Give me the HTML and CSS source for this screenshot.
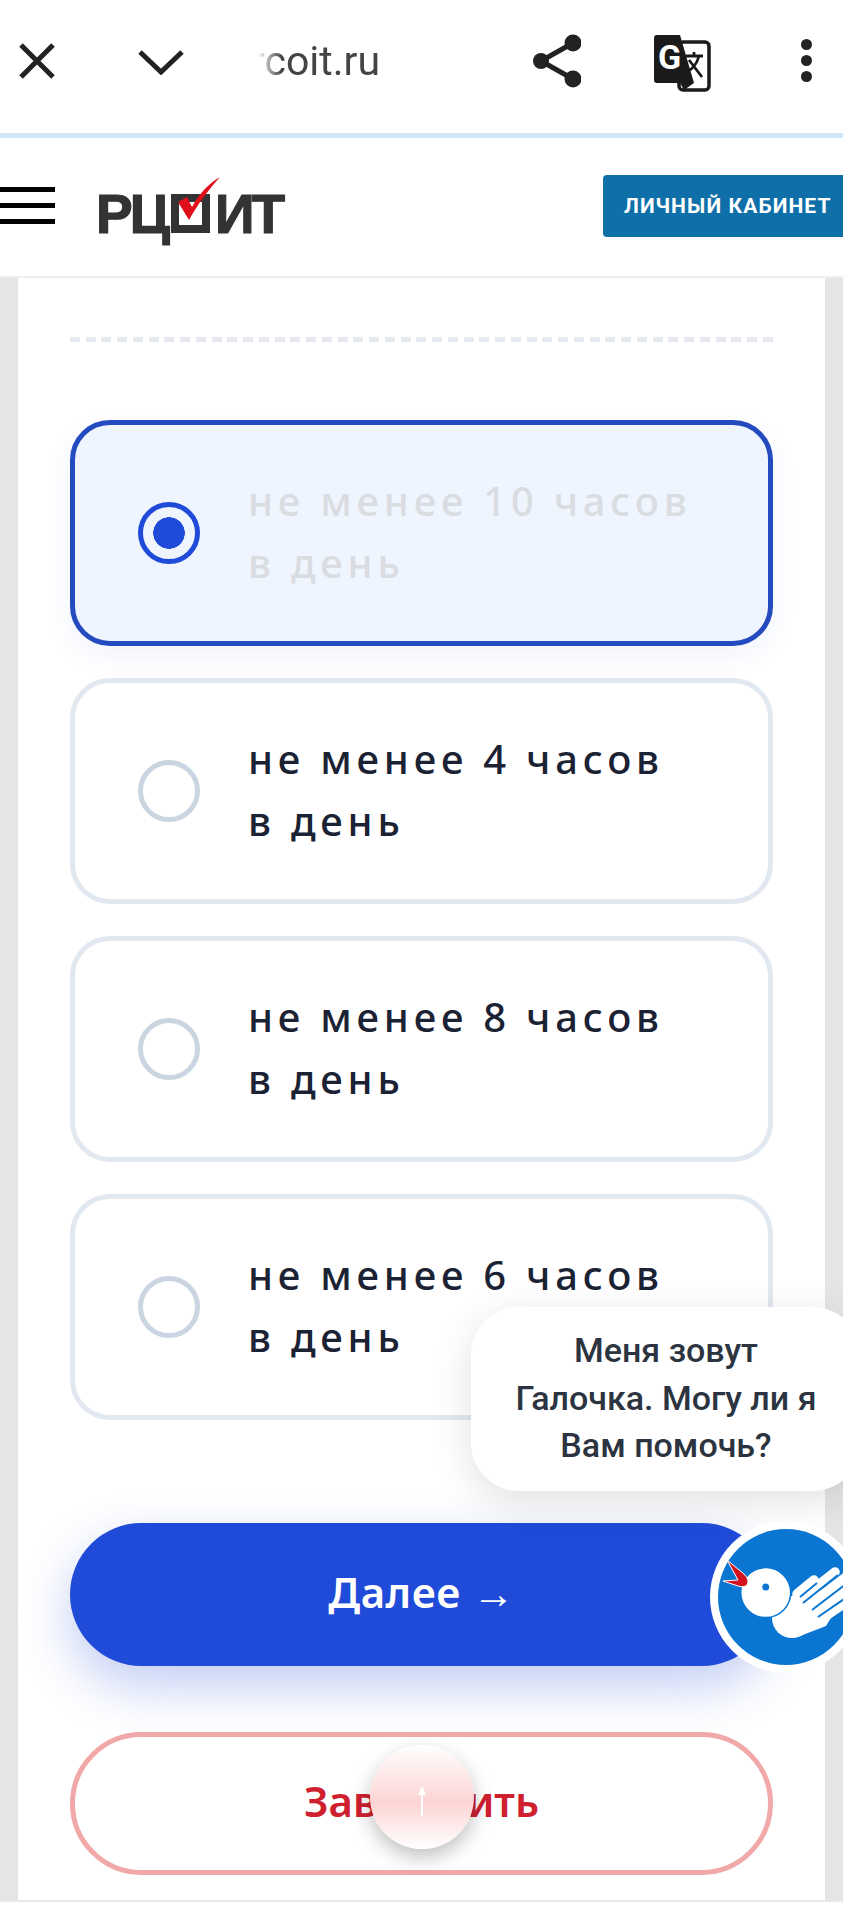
FILE: index.html
```html
<!DOCTYPE html>
<html lang="ru">
<head>
<meta charset="utf-8">
<title>РЦОИТ</title>
<link rel="stylesheet" href="styles.css">
</head>
<body>
<div class="toolbar">
  <div class="tb-left">
    <svg class="ic-x" width="36" height="36" viewBox="0 0 36 36"><path d="M2 2L34 34M34 2L2 34" stroke="#222" stroke-width="5" fill="none"/></svg>
    <svg class="ic-chev" width="46" height="26" viewBox="0 0 46 26"><path d="M2 3L23 23L44 3" stroke="#222" stroke-width="5" fill="none"/></svg>
    <div class="url"><span>rcoit.ru</span></div>
  </div>
  <div class="tb-right">
    <svg class="ic-share" width="48" height="54" viewBox="0 0 48 54"><path d="M40 9L8 27L40 45" stroke="#222" stroke-width="5" fill="none"/><circle cx="40" cy="9" r="8.5" fill="#222"/><circle cx="8" cy="27" r="8" fill="#222"/><circle cx="40" cy="45" r="8.5" fill="#222"/></svg>
    <svg class="ic-tr" width="58" height="58" viewBox="0 0 58 58"><rect x="26" y="8" width="30" height="48" rx="4" fill="#fff" stroke="#1a1a1a" stroke-width="3.5"/><path d="M4 1H27L41 49H4Q1 49 1 46V4Q1 1 4 1Z" fill="#1a1a1a"/><path d="M27 49L41 49L31 56Z" fill="#1a1a1a"/><text class="tr-g" x="5" y="35">G</text><path d="M33 22H50M41 18V22M46 22Q43 33 34 38M36 26L49 43" stroke="#1a1a1a" stroke-width="2.8" fill="none"/></svg>
    <div class="dots"><i></i><i></i><i></i></div>
  </div>
</div>
<div class="progress"></div>
<header class="site-head">
  <div class="burger"><i></i><i></i><i></i></div>
  <div class="logo">
    <span class="logo-t">РЦ</span><span class="logo-box"></span><span class="logo-t">ИТ</span>
    <svg class="logo-check" width="46" height="46" viewBox="0 0 46 46"><path d="M1 26L10 21L15 31C22 18 31 8 43 1C32 13 21 28 12 44Z" fill="#e0101a"/></svg>
  </div>
  <a class="cabinet">Личный кабинет</a>
</header>
<main class="page">
  <section class="card">
    <div class="dash"></div>
    <div class="options">
      <div class="opt opt-on"><span class="radio radio-on"></span><p class="opt-text">не менее 10 часов<br>в день</p></div>
      <div class="opt"><span class="radio"></span><p class="opt-text">не менее 4 часов<br>в день</p></div>
      <div class="opt"><span class="radio"></span><p class="opt-text">не менее 8 часов<br>в день</p></div>
      <div class="opt"><span class="radio"></span><p class="opt-text">не менее 6 часов<br>в день</p></div>
    </div>
    <div class="actions">
      <button class="btn btn-next"><span class="btn-label">Далее →</span></button>
      <button class="btn btn-end"><span class="btn-label">Завершить</span></button>
    </div>
  </section>
</main>
<div class="foot"></div>

<div class="tip">Меня зовут<br>Галочка. Могу ли я<br>Вам помочь?</div>
<svg class="bird" width="160" height="160" viewBox="706 1517 160 160">
  <defs><clipPath id="bc"><circle cx="786" cy="1597" r="68"/></clipPath></defs>
  <circle cx="786" cy="1597" r="76" fill="#fff"/>
  <circle cx="786" cy="1597" r="68" fill="#0a76d2"/>
  <g clip-path="url(#bc)">
    <circle cx="792" cy="1618" r="20" fill="#fff"/>
    <path d="M782 1603L800 1590L848 1590L826 1626L800 1636Z" fill="#fff"/>
    <path d="M797 1594L814 1580M802 1598L835 1572M808 1606L855 1570M814 1613L855 1582M820 1620L855 1596" stroke="#fff" stroke-width="9.500" stroke-linecap="round" fill="none"/>
    <path d="M800 1597L817 1583M803 1603L838 1575M812 1610L850 1581M818 1617L850 1595" stroke="#0a76d2" stroke-width="2" fill="none"/>
    <circle cx="765.700" cy="1592.600" r="25" fill="#fff" stroke="#0a76d2" stroke-width="1.500"/>
    <circle cx="765.700" cy="1587" r="3.500" fill="#0a76d2"/>
    <path d="M727 1560L744 1574Q750 1580 747 1585Q744 1588 738 1586L723 1581L738 1580Z" fill="#d3111f" stroke="#fff" stroke-width="1"/>
  </g>
</svg>
<div class="up"><svg width="8" height="30" viewBox="0 0 8 30"><path d="M4 0L8 9H5V30H3V9H0Z" fill="#fff"/></svg></div>
</body>
</html>
```

FILE: styles.css
```css
* { box-sizing: border-box; }
html, body { margin: 0; padding: 0; }
body {
  width: 843px;
  height: 1920px;
  overflow: hidden;
  position: relative;
  background: #fff;
  font-family: "Noto Sans", sans-serif;
  display: flex;
  flex-direction: column;
}
.toolbar {
  height: 133px;
  flex: none;
  display: flex;
  align-items: center;
  justify-content: space-between;
  background: #fff;
  padding: 0 31px 12px 19px;
}
.tb-left, .tb-right { display: flex; align-items: center; }
.ic-chev { margin-left: 83px; margin-top: 2px; }
.url {
  margin-left: 74px;
  width: 126px;
  overflow: hidden;
  white-space: nowrap;
  font: 400 41px/50px "Roboto", sans-serif;
  color: #444;
  -webkit-mask-image: linear-gradient(90deg, transparent 0, #000 24px);
  mask-image: linear-gradient(90deg, transparent 0, #000 24px);
}
.url span { display: block; margin-left: -7px; }
.ic-share { margin-right: 72px; }
.ic-tr { margin-right: 90px; margin-top: 4px; }
.tr-g { font: 700 34px "Roboto", sans-serif; fill: #fff; }
.dots { display: flex; flex-direction: column; gap: 5px; }
.dots i { display: block; width: 11px; height: 11px; border-radius: 50%; background: #222; }
.progress { height: 5px; flex: none; background: #cfe6f8; }
.site-head {
  height: 140px;
  flex: none;
  display: flex;
  align-items: center;
  background: #fff;
  border-bottom: 2px solid #eeeeee;
}
.burger { width: 55px; display: flex; flex-direction: column; gap: 11px; margin-top: -4px; }
.burger i { display: block; height: 5px; background: #000; }
.logo {
  position: relative;
  display: flex;
  align-items: center;
  margin-left: 41px;
  margin-top: 13px;
  height: 50px;
}
.logo-t {
  font: 700 55px/50px "Liberation Sans", sans-serif;
  letter-spacing: -3px;
  color: #333;
  -webkit-text-stroke: 1.200px #333;
}
.logo-box {
  width: 39px;
  height: 39px;
  border: 8px solid #333;
  margin: 0 5px 0 4px;
}
.logo-check { position: absolute; left: 81px; top: -13px; }
.cabinet {
  margin-left: auto;
  width: 240px;
  height: 62px;
  flex: none;
  border-radius: 4px 0 0 4px;
  background: #0f6fa8;
  color: #fff;
  font: 700 21px/62px "Roboto", sans-serif;
  letter-spacing: 1.100px;
  text-transform: uppercase;
  padding-left: 21px;
  white-space: nowrap;
  margin-top: -2px;
  overflow: hidden;
}
.page {
  flex: none;
  height: 1624px;
  background: #e5e5e5;
  padding: 0 18px;
  border-bottom: 2px solid #e8e8e8;
}
.card {
  height: 100%;
  background: #fff;
  padding: 59px 52px 0;
}
.dash {
  height: 5px;
  background: repeating-linear-gradient(90deg, #e6eaf0 0 10px, transparent 10px 15.750px);
}
.options {
  display: flex;
  flex-direction: column;
  gap: 32px;
  margin-top: 78px;
}
.opt {
  height: 226px;
  border: 5px solid #e2e8f0;
  border-radius: 40px;
  display: flex;
  align-items: center;
  padding-left: 63px;
  background: #fff;
}
.opt-on {
  border-color: #234bbf;
  background: #eff5fe;
  box-shadow: 0 10px 28px rgba(31, 75, 216, 0.06);
}
.radio {
  width: 62px;
  height: 62px;
  flex: none;
  border-radius: 50%;
  border: 5px solid #cbd5e1;
  background: #fff;
}
.radio-on {
  border-color: #1f4bd8;
  background: radial-gradient(circle, #1f4bd8 0 15.500px, #eff5fe 16px);
}
.opt-text {
  margin: 0 0 3px 48px;
  font-size: 40px;
  line-height: 62px;
  font-weight: 500;
  letter-spacing: 4.800px;
  color: #1a2233;
  white-space: nowrap;
}
.opt-on .opt-text { color: #d9dce0; }
.actions {
  display: flex;
  flex-direction: column;
  gap: 66px;
  margin-top: 103px;
}
.btn {
  display: block;
  width: 100%;
  height: 143px;
  border-radius: 72px;
  font-family: "Noto Sans", sans-serif;
  font-size: 42px;
  font-weight: 600;
  padding: 0;
}
.btn-label { display: block; margin-top: -7px; }
.btn-next {
  border: none;
  background: #1f4bd8;
  color: #fff;
  letter-spacing: 0.500px;
  box-shadow: 0 20px 50px rgba(31, 75, 216, 0.28);
}
.btn-end {
  border: 5px solid #f0a8a8;
  background: #fff;
  color: #cf2030;
}
.foot { flex: 1; background: #fff; }
.tip {
  position: absolute;
  left: 471px;
  top: 1307px;
  width: 390px;
  height: 184px;
  padding-top: 20px;
  border-radius: 48px;
  background: #fff;
  box-shadow: 0 10px 40px rgba(0, 0, 0, 0.12);
  font: 500 34px/47.500px "Roboto", sans-serif;
  color: #2b3440;
  text-align: center;
  white-space: nowrap;
}
.bird { position: absolute; left: 706px; top: 1517px; }
.up {
  position: absolute;
  left: 370px;
  top: 1745px;
  width: 104px;
  height: 104px;
  border-radius: 50%;
  background: linear-gradient(180deg, #fff 0, #fcd4d4 55%, #fff 100%);
  box-shadow: 0 8px 20px rgba(0, 0, 0, 0.25);
  display: flex;
  align-items: center;
  justify-content: center;
}
.up svg { margin-top: 8px; }
```
